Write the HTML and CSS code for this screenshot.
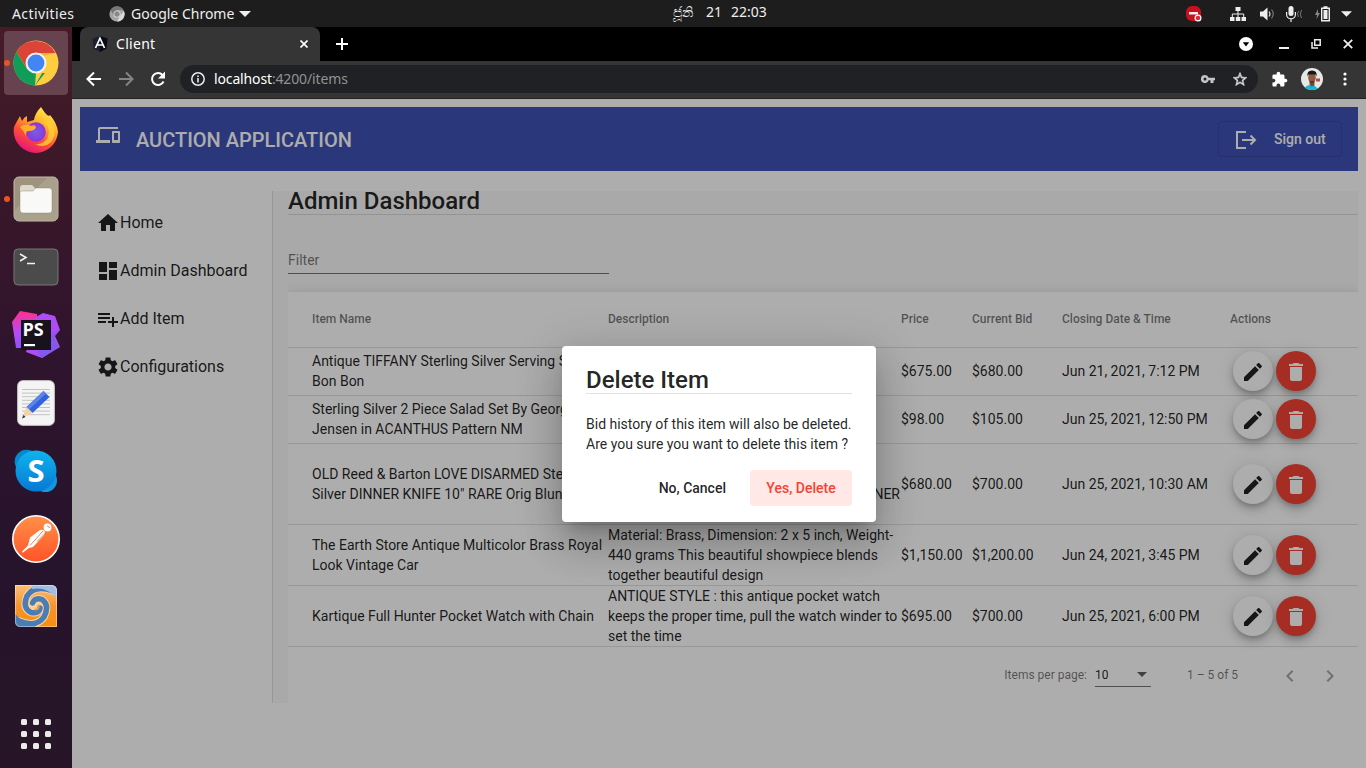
FILE: index.html
```html
<!DOCTYPE html>
<html lang="en">
<head>
<meta charset="utf-8">
<title>Client</title>
<link rel="stylesheet" href="styles.css">
</head>
<body>
<svg class="defs" width="0" height="0">
  <defs>
    <symbol id="edit" viewBox="0 0 24 24"><path d="M3 17.25V21h3.75L17.81 9.94l-3.75-3.75L3 17.25zM20.71 7.04c.39-.39.39-1.02 0-1.41l-2.34-2.34c-.39-.39-1.02-.39-1.41 0l-1.83 1.83 3.75 3.75 1.83-1.83z"/></symbol>
    <symbol id="trash" viewBox="0 0 24 24"><path d="M6 19c0 1.1.9 2 2 2h8c1.1 0 2-.9 2-2V7H6v12zM19 4h-3.5l-1-1h-5l-1 1H5v2h14V4z"/></symbol>
  </defs>
</svg>
<div class="desktop">
  <header class="topbar">
    <span class="activities">Activities</span>
    <svg class="mono-chrome" viewBox="0 0 16 16"><circle cx="8" cy="8" r="7.6" fill="#a5a5a5"/><path d="M1.5 4A7.6 7.6 0 0 1 14.6 4H8L5 10z" fill="#777"/><path d="M15 5a7.6 7.6 0 0 1-7 10.600l3-5.600z" fill="#d8d8d8"/><circle cx="8" cy="8" r="3.600" fill="#ddd"/><circle cx="8" cy="8" r="2.700" fill="#888"/></svg>
    <span class="appname">Google Chrome</span>
    <svg class="caret" viewBox="0 0 12 6"><path d="M0 0h12L6 6z"/></svg>
    <span class="clock"><span class="month">ජූනි</span><span>21</span><span>22:03</span></span>
    <div class="tray">
      <svg class="t-alert" width="18" height="18" viewBox="0 0 18 18"><rect x="1" y="1" width="15" height="15" rx="6" fill="#c9101e"/><rect x="4" y="7" width="9" height="2.500" fill="#eee"/><circle cx="13" cy="13" r="3.500" fill="#fff"/><circle cx="13" cy="13" r="2.300" fill="#e02a36"/></svg>
      <svg class="t-net" width="16" height="14" viewBox="0 0 16 14"><path d="M5.500 0h5v4h-5zM0 10h4.500v4H0zM5.800 10h4.500v4H5.800zM11.500 10H16v4h-4.500z"/><path d="M8 4v6M2.300 10V7h11.400v3" fill="none" stroke="#eee"/></svg>
      <svg class="t-vol" width="15" height="14" viewBox="0 0 15 14"><path d="M0 4.500h3L7.500.5v13L3 9.500H0z"/><path d="M9 4.500q2 2.500 0 5" fill="none" stroke="#ddd" stroke-width="1.200"/><path d="M11.500 2.500q3.500 4.500 0 9" fill="none" stroke="#777" stroke-width="1.200"/></svg>
      <svg class="t-mic" width="17" height="16" viewBox="0 0 17 16"><rect x="2.500" y="0" width="5" height="10" rx="2.500"/><path d="M.6 6v2.500a4.400 4.400 0 0 0 8.800 0V6M5 13v3" fill="none" stroke="#eee" stroke-width="1.200"/><path d="M12.500 5q-2 3 0 6M15.500 4q-2.500 4 0 8" fill="none" stroke="#777"/></svg>
      <svg class="t-bat" width="15" height="16" viewBox="0 0 15 16"><path d="M3 3L0 9h2l-.5 4L5 7H3z" fill="#888"/><path d="M6.700 2.200h7.600v12.600H6.700zM8.500 1h4" fill="none" stroke="#eee" stroke-width="1.400"/><path d="M8.500 4h4v9h-4z"/></svg>
      <svg class="t-caret" width="11" height="6" viewBox="0 0 12 6"><path d="M0 0h12L6 6z"/></svg>
    </div>
  </header>

  <div class="workspace">
    <nav class="dock">
      <div class="dock-item active"><i class="running"></i>
        <svg width="46" height="46" viewBox="0 0 46 46"><circle cx="23" cy="23" r="22.500" fill="#ffcd40"/><path d="M3.500 11.800A22.500 22.500 0 0 1 42.500 13H23L13.500 28z" fill="#db4437"/><path d="M3.500 11.800L14 29l9 4.500L22 45.500A22.500 22.500 0 0 1 3.500 11.800z" fill="#0f9d58"/><path d="M14 28l9 5h9L22 45.500 14.200 28z" fill="#0f9d58"/><path d="M22 45.500L32 28l-9 5z" fill="#ffcd40"/><path d="M23 13h19l-19 5z" fill="#9e6a1d" opacity=".25"/><circle cx="23" cy="23" r="10.500" fill="#f1f1f1"/><circle cx="23" cy="23" r="8.400" fill="#4285f4"/></svg>
      </div>
      <div class="dock-item firefox">
        <svg width="46" height="48" viewBox="0 0 46 48"><defs><linearGradient id="ff" x1=".8" y1="0" x2=".3" y2="1"><stop offset="0" stop-color="#fff44f"/><stop offset=".35" stop-color="#ffb52c"/><stop offset=".65" stop-color="#ff4f38"/><stop offset="1" stop-color="#e5127a"/></linearGradient><radialGradient id="fp"><stop offset="0" stop-color="#6f62e8"/><stop offset="1" stop-color="#9034d8"/></radialGradient></defs><path d="M3 17L7 10l2 5q2-4 5-5v6l7-2q1-7 7-13 3 5 6 8l2 1 1-1q7 8 8 17A22.400 22.400 0 0 1 23 47 22.400 22.400 0 0 1 .6 25Q.6 20 3 17z" fill="url(#ff)"/><circle cx="23" cy="26" r="9.800" fill="url(#fp)"/><path d="M7 21q6-4 11-1 4-2 5 1-1 4-7 4-4 0-3 5-2-5-6-9z" fill="#ffad2b"/><path d="M31 16q8 7 3 17-5 6-12 5 10 5 17-3 6-10-2-20z" fill="#ffcf36" opacity=".8"/></svg>
      </div>
      <div class="dock-item"><i class="running"></i>
        <svg width="46" height="46" viewBox="0 0 46 46"><rect x="1" y="1" width="44" height="44" rx="5" fill="#9d937e" stroke="#c5bda9"/><path d="M2 34L34 2h10v42H2z" fill="#aaa18c"/><path d="M7 12q0-3 3-3h9l4 4v8H7z" fill="#ddd8cc"/><path d="M7 17q0-2 2-2h11l3-3h13q3 0 3 3v19q0 3-3 3H10q-3 0-3-3z" fill="#f9f9f8" stroke="#857b68" stroke-width=".4"/></svg>
      </div>
      <div class="dock-item">
        <svg width="46" height="38" viewBox="0 0 46 38"><rect x="1" y="1" width="44" height="36" rx="4" fill="#4b4b4b" stroke="#777"/><path d="M7 6l6 3.500L7 13M14 15.500h8" fill="none" stroke="#f1f1f1" stroke-width="1.600"/></svg>
      </div>
      <div class="dock-item storm">
        <svg width="48" height="48" viewBox="0 0 48 48"><defs><linearGradient id="pa" x1="0" y1="0" x2="0" y2="1"><stop offset="0" stop-color="#ff318c"/><stop offset=".6" stop-color="#b74af7"/><stop offset="1" stop-color="#8b52ff"/></linearGradient></defs><path d="M8 1l17 3 1 20-12 14H4L0 12z" fill="url(#pa)"/><path d="M24 7l7-4 12 3 5 14-5 6 5 11-18 11-16-6z" fill="#b04cf5"/><path d="M37 27l10-8-5 8 5 10-17 11-5-5z" fill="#8258ed"/><rect x="9" y="10" width="30" height="30" fill="#18121c"/><text x="10.500" y="26" class="ps">PS</text><path d="M12 34h11v2.200H12z" fill="#fff"/></svg>
      </div>
      <div class="dock-item">
        <svg width="38" height="46" viewBox="0 0 38 46"><rect x=".7" y=".7" width="36.600" height="44.600" rx="5" fill="#f4f4f4" stroke="#d2d2d2"/><path d="M5 9.500h28M5 13.100h28M5 16.700h28M5 20.300h28M5 23.900h28M5 27.500h28M5 31.100h28M5 34.700h28" stroke="#c2c2c2"/><path d="M26.500 11l6 6-17 16-6-6z" fill="#3462dd"/><path d="M26.500 11l2.500 2.500-17 16-2.500-2.500z" fill="#5a86ec"/><path d="M9.500 27l6 6L5 38z" fill="#f2d2ad"/><path d="M6.500 35l2 2L5 38.500z" fill="#333"/></svg>
      </div>
      <div class="dock-item">
        <svg width="44" height="44" viewBox="0 0 44 44"><defs><linearGradient id="sk" x1="0" y1="0" x2="0" y2="1"><stop offset="0" stop-color="#0eb4ee"/><stop offset="1" stop-color="#0878d4"/></linearGradient></defs><circle cx="12.500" cy="12.500" r="11.800" fill="#0789cf"/><circle cx="31.500" cy="31.500" r="11.500" fill="#1597de"/><circle cx="22" cy="22" r="20.500" fill="url(#sk)"/><text x="22" y="33" class="skype-s">S</text></svg>
      </div>
      <div class="dock-item">
        <svg width="48" height="48" viewBox="0 0 48 48"><defs><linearGradient id="pm" x1="0" y1="0" x2="0" y2="1"><stop offset="0" stop-color="#ff9048"/><stop offset="1" stop-color="#ff5327"/></linearGradient></defs><circle cx="24" cy="24" r="23.200" fill="url(#pm)" stroke="#fff" stroke-width="1.600"/><circle cx="35.500" cy="12.500" r="3.900" fill="#fff"/><path d="M28 15q3-1 5 1.500 0 3-3 6L21 32l-4 1-6 4.500q-2 0 0-2l5-5 2-8z" fill="#fff"/><path d="M31 16L18 30.500M33 18.500l-8 8M35.500 10.500q.5 2 2.500 2" stroke="#ff6c37" stroke-width=".9" fill="none"/></svg>
      </div>
      <div class="dock-item swirl">
        <svg width="42" height="42" viewBox="0 0 42 42"><defs><linearGradient id="sw" x1="0" y1="0" x2="0" y2="1"><stop offset="0" stop-color="#fbc07c"/><stop offset=".5" stop-color="#f5942e"/><stop offset="1" stop-color="#f98c0c"/></linearGradient><clipPath id="swc"><path d="M0 0h36q6 0 6 6v36H6q-6 0-6-6z"/></clipPath></defs><g clip-path="url(#swc)"><path d="M0 0h42v42H0z" fill="url(#sw)"/><g fill="none" stroke-linecap="round"><g stroke="#fcd3a0" stroke-width="7.500"><path d="M38 6Q20-1 12 11 7 23 16 27.500 24 29 25 23 24 19 20 20.500"/><path d="M4 36Q21 43 29 32 35 20 27 14.500 20 12 17.500 18 17 23 20 24"/></g><g stroke="#4a7cb5" stroke-width="5.500"><path d="M38 6Q20-1 12 11 7 23 16 27.500 24 29 25 23"/><path d="M4 36Q21 43 29 32 35 20 27 14.500 20 12 17.500 18"/></g><path d="M20.500 24.500q4 0 3-4" stroke="#f39a3d" stroke-width="2"/></g><path d="M17 0h25v13Q31 1 17 4z" fill="#a3bee2"/><path d="M0 29q11 12 24 9l-4 4H0z" fill="#4a7cb5"/></g><path d="M.5.5H36q5.500 0 5.500 6v35H6q-5.500 0-5.500-6z" fill="none" stroke="#fff" opacity=".4"/></svg>
      </div>
      <div class="dock-apps"><i></i><i></i><i></i><i></i><i></i><i></i><i></i><i></i><i></i></div>
    </nav>

    <section class="browser">
      <div class="tabstrip">
        <div class="tab">
          <svg width="16" height="16" viewBox="0 0 16 16"><path d="M8 0l7.500 2.600-1.200 10L8 16l-6.300-3.400L.5 2.600z" fill="#1b2030"/><path d="M8 0l7.500 2.600-1.200 10L8 16z" fill="#080b16"/><path d="M3.500 12L8 2.200 12.500 12M5.500 9h5" fill="none" stroke="#fff" stroke-width="1.700"/></svg>
          <span>Client</span>
          <svg class="tab-close" width="8" height="8" viewBox="0 0 8 8"><path d="M.5.5l7 7M7.500.5l-7 7" stroke="#fff" stroke-width="1.700"/></svg>
        </div>
        <svg class="newtab" width="12" height="12" viewBox="0 0 12 12"><path d="M6 0v12M0 6h12" stroke="#fff" stroke-width="2"/></svg>
        <div class="wincontrols">
          <svg width="14" height="14" viewBox="0 0 14 14"><circle cx="7" cy="7" r="7" fill="#fff"/><path d="M3.800 5.200h6.400L7 9.500z" fill="#000"/></svg>
          <svg width="10" height="10" viewBox="0 0 10 10"><path d="M0 9h10" stroke="#eee" stroke-width="2"/></svg>
          <svg width="10" height="10" viewBox="0 0 10 10"><path d="M3.700.8h5.500v5.500H3.700zM1 3v6h6" fill="none" stroke="#eee" stroke-width="1.500"/></svg>
          <svg width="10" height="10" viewBox="0 0 10 10"><path d="M.8.8l8.400 8.400M9.200.8L.8 9.200" stroke="#eee" stroke-width="1.800"/></svg>
        </div>
      </div>
      <div class="toolbar">
        <svg width="16" height="16" viewBox="0 0 16 16"><path d="M15 8H2M8 1.500L1.500 8 8 14.500" fill="none" stroke="#fff" stroke-width="2"/></svg>
        <svg width="16" height="16" viewBox="0 0 16 16"><path d="M1 8h13M8 1.500L14.500 8 8 14.500" fill="none" stroke="#858585" stroke-width="2"/></svg>
        <svg width="16" height="16" viewBox="0 0 16 16"><path d="M13.500 10.500A6 6 0 1 1 12.500 4L14 5.500" fill="none" stroke="#fff" stroke-width="2"/><path d="M15 .5v7H8z" fill="#fff"/></svg>
        <div class="omnibox">
          <svg width="14" height="14" viewBox="0 0 14 14"><circle cx="7" cy="7" r="6.200" fill="none" stroke="#e8eaed" stroke-width="1.500"/><path d="M6.200 6h1.600v4.500H6.200zM6.200 3.400h1.600V5H6.200z" fill="#e8eaed"/></svg>
          <span class="url"><b>localhost</b>:4200/items</span>
          <svg class="key" width="14" height="8" viewBox="0 0 14 8"><path fill-rule="evenodd" d="M4 0a4 4 0 1 0 3.700 5.300H9.500V8h3V5.300H14V2.700H7.700A4 4 0 0 0 4 0zm0 2.500a1.500 1.500 0 1 1 0 3 1.500 1.500 0 0 1 0-3z" fill="#c4c4c4"/></svg>
          <svg width="14" height="14" viewBox="0 0 24 24"><path d="M22 9.240l-7.190-.62L12 2 9.190 8.630 2 9.240l5.460 4.730L5.820 21 12 17.270 18.180 21l-1.630-7.030L22 9.240zM12 15.400l-3.760 2.270 1-4.280-3.320-2.880 4.380-.38L12 6.100l1.710 4.040 4.380.38-3.320 2.880 1 4.280L12 15.400z" fill="#d2d2d2" stroke="#d2d2d2" stroke-width=".8" transform="translate(-2.400 -1.800) scale(1.200)"/></svg>
        </div>
        <svg class="ext" width="17" height="17" viewBox="0 0 24 24"><path fill="#fff" d="M20.500 11H19V7c0-1.100-.9-2-2-2h-4V3.500C13 2.120 11.880 1 10.500 1S8 2.120 8 3.500V5H4c-1.100 0-1.990.9-1.990 2v3.800H3.500c1.490 0 2.700 1.210 2.700 2.700s-1.210 2.700-2.700 2.700H2V20c0 1.100.9 2 2 2h3.800v-1.500c0-1.490 1.210-2.700 2.700-2.700 1.490 0 2.700 1.210 2.700 2.700V22H17c1.100 0 2-.9 2-2v-4h1.500c1.380 0 2.500-1.120 2.500-2.500S21.880 11 20.500 11z"/></svg>
        <svg class="avatar" width="22" height="22" viewBox="0 0 22 22"><defs><clipPath id="av"><circle cx="11" cy="11" r="11"/></clipPath></defs><g clip-path="url(#av)"><path d="M0 0h22v22H0z" fill="#e6e8e6"/><path d="M15 10.500h4v3h-4z" fill="#b84848"/><path d="M3 22q1-5 7-5 5 0 7 5z" fill="#16b5d5"/><path d="M8.500 12h5v5.500l-3 1-2-2z" fill="#7c4a32"/><ellipse cx="11" cy="9.500" rx="3.800" ry="5.200" fill="#8f5b42"/><path d="M6.500 8.500q-1-6 4.500-6 5.500 0 4.500 6l-1-2-7 0z" fill="#1b1717"/><path d="M8.500 12.500q2.500 1 5 0-1 3-2.500 3t-2.500-3z" fill="#5a3526"/></g></svg>
        <svg class="menu" width="4" height="14" viewBox="0 0 4 14"><g fill="#fff"><circle cx="2" cy="2" r="1.600"/><circle cx="2" cy="7" r="1.600"/><circle cx="2" cy="12" r="1.600"/></g></svg>
      </div>

      <main class="page">
        <div class="appbar">
          <svg class="devices" width="24" height="24" viewBox="0 0 24 24"><path d="M4 6h18V4H4c-1.100 0-2 .9-2 2v11H0v3h14v-3H4V6zm19 2h-6c-.55 0-1 .45-1 1v10c0 .55.45 1 1 1h6c.55 0 1-.45 1-1V9c0-.55-.45-1-1-1zm-1 9h-4v-7h4v7z"/></svg>
          <span class="brand">AUCTION APPLICATION</span>
          <button class="signout"><svg width="22" height="20" viewBox="0 0 22 20"><path d="M11 2H2v16h9M7 10h12M15.500 5.500L20 10l-4.500 4.500" fill="none" stroke="#fff" stroke-width="2"/></svg><span>Sign out</span></button>
        </div>
        <div class="shell">
          <aside class="sidenav">
            <a><svg viewBox="0 0 24 24"><path d="M10 20v-6h4v6h5v-8h3L12 3 2 12h3v8z"/></svg>Home</a>
            <a><svg viewBox="0 0 24 24"><path d="M3 13h8V3H3v10zm0 8h8v-6H3v6zm10 0h8V11h-8v10zm0-18v6h8V3h-8z"/></svg>Admin Dashboard</a>
            <a><svg viewBox="0 0 24 24"><path d="M14 10H2v2h12v-2zm0-4H2v2h12V6zm4 8v-4h-2v4h-4v2h4v4h2v-4h4v-2h-4zM2 16h8v-2H2v2z"/></svg>Add Item</a>
            <a><svg viewBox="0 0 24 24"><path d="M19.140 12.940c.04-.3.060-.61.060-.94 0-.32-.02-.64-.07-.94l2.030-1.580c.18-.14.230-.41.120-.61l-1.920-3.320c-.12-.22-.37-.29-.59-.22l-2.390.96c-.5-.38-1.030-.7-1.620-.94l-.36-2.540c-.04-.24-.24-.41-.48-.41h-3.840c-.24 0-.43.17-.47.41l-.36 2.540c-.59.24-1.130.57-1.620.94l-2.390-.96c-.22-.08-.47 0-.59.22L2.740 8.870c-.12.21-.08.470.12.610l2.030 1.580c-.05.3-.09.630-.09.940s.02.640.07.940l-2.030 1.580c-.18.140-.23.410-.12.610l1.920 3.320c.12.220.37.290.59.220l2.390-.96c.5.380 1.030.7 1.620.94l.36 2.540c.05.240.24.410.48.410h3.840c.24 0 .44-.17.470-.41l.36-2.540c.59-.24 1.130-.56 1.620-.94l2.390.96c.22.080.47 0 .59-.22l1.920-3.320c.12-.22.070-.47-.12-.61l-2.010-1.580zM12 15.600c-1.980 0-3.600-1.620-3.600-3.600s1.620-3.600 3.600-3.600 3.600 1.620 3.600 3.600-1.620 3.600-3.600 3.600z"/></svg>Configurations</a>
          </aside>
          <div class="content">
            <h1>Admin Dashboard</h1>
            <div class="filter">Filter</div>
            <div class="table">
              <div class="row head"><span>Item Name</span><span>Description</span><span>Price</span><span>Current Bid</span><span>Closing Date &amp; Time</span><span>Actions</span></div>
              <div class="row short"><span>Antique TIFFANY Sterling Silver Serving Spoon<br>Bon Bon</span><span></span><span>$675.00</span><span>$680.00</span><span>Jun 21, 2021, 7:12 PM</span><span class="actions"><button class="fab"><svg><use href="#edit"/></svg></button><button class="fab warn"><svg><use href="#trash"/></svg></button></span></div>
              <div class="row short"><span>Sterling Silver 2 Piece Salad Set By Georg<br>Jensen in ACANTHUS Pattern NM</span><span></span><span>$98.00</span><span>$105.00</span><span>Jun 25, 2021, 12:50 PM</span><span class="actions"><button class="fab"><svg><use href="#edit"/></svg></button><button class="fab warn"><svg><use href="#trash"/></svg></button></span></div>
              <div class="row tall"><span>OLD Reed &amp; Barton LOVE DISARMED Sterling<br>Silver DINNER KNIFE 10" RARE Orig Blunt</span><span class="tail">DINNER</span><span>$680.00</span><span>$700.00</span><span>Jun 25, 2021, 10:30 AM</span><span class="actions"><button class="fab"><svg><use href="#edit"/></svg></button><button class="fab warn"><svg><use href="#trash"/></svg></button></span></div>
              <div class="row"><span>The Earth Store Antique Multicolor Brass Royal<br>Look Vintage Car</span><span>Material: Brass, Dimension: 2 x 5 inch, Weight-<br>440 grams This beautiful showpiece blends<br>together beautiful design</span><span>$1,150.00</span><span>$1,200.00</span><span>Jun 24, 2021, 3:45 PM</span><span class="actions"><button class="fab"><svg><use href="#edit"/></svg></button><button class="fab warn"><svg><use href="#trash"/></svg></button></span></div>
              <div class="row"><span>Kartique Full Hunter Pocket Watch with Chain</span><span>ANTIQUE STYLE : this antique pocket watch<br>keeps the proper time, pull the watch winder to<br>set the time</span><span>$695.00</span><span>$700.00</span><span>Jun 25, 2021, 6:00 PM</span><span class="actions"><button class="fab"><svg><use href="#edit"/></svg></button><button class="fab warn"><svg><use href="#trash"/></svg></button></span></div>
              <div class="paginator">
                <span>Items per page:</span>
                <div class="select">10<svg width="10" height="5" viewBox="0 0 10 5"><path d="M0 0h10L5 5z"/></svg></div>
                <span class="range">1 – 5 of 5</span>
                <svg class="chev" viewBox="0 0 24 24"><path d="M15.410 7.410L14 6l-6 6 6 6 1.410-1.410L10.830 12z"/></svg>
                <svg class="chev next" viewBox="0 0 24 24"><path d="M10 6L8.590 7.410 13.170 12l-4.580 4.590L10 18l6-6z"/></svg>
              </div>
            </div>
          </div>
        </div>
        <div class="overlay">
          <div class="dialog">
            <h2>Delete Item</h2>
            <p>Bid history of this item will also be deleted.<br>Are you sure you want to delete this item ?</p>
            <div class="dialog-actions"><button>No, Cancel</button><button class="danger">Yes, Delete</button></div>
          </div>
        </div>
      </main>
    </section>
  </div>
</div>
</body>
</html>
```
FILE: styles.css
```css
* { box-sizing: border-box; }
body { margin: 0; overflow: hidden; font-family: Roboto, sans-serif; }
svg { display: block; flex: none; }
.defs { position: absolute; }
button { font: inherit; border: 0; padding: 0; background: none; }
.desktop { width: 1366px; height: 768px; display: flex; flex-direction: column; background: #000; }

/* GNOME top bar */
.topbar { position: relative; height: 27px; flex: none; display: flex; align-items: center; background: #1d1d1d; color: #eee; font: 14px/27px "Noto Sans", sans-serif; padding-left: 12px; }
.topbar svg { fill: #eee; }
.activities { width: 97px; letter-spacing: .4px; }
.mono-chrome { width: 16px; height: 16px; margin-right: 6px; }
.appname { width: 108px; white-space: nowrap; }
.caret { width: 12px; height: 6px; }
.clock { position: absolute; left: 673px; top: -2px; display: flex; gap: 9px; }
.month { width: 24px; white-space: nowrap; }
.tray { margin-left: auto; display: flex; align-items: center; padding-right: 14px; }
.t-net { margin-left: 27px; }
.t-vol { margin-left: 14px; }
.t-mic { margin-left: 11px; }
.t-bat { margin-left: 12px; }
.t-caret { margin-left: 11px; }

.workspace { flex: 1; min-height: 0; display: flex; }

/* Launcher */
.dock { width: 72px; flex: none; position: relative; background: linear-gradient(#451b26, #30142d 42%, #26132c 75%, #271527); padding: 4px 4px 0; display: flex; flex-direction: column; gap: 4px; }
.dock-item { position: relative; height: 64px; flex: none; border-radius: 4px; display: flex; align-items: center; justify-content: center; }
.dock-item.active { background: #66434e; }
.firefox, .storm, .swirl { padding-bottom: 2px; }
.running { position: absolute; left: 0; top: 29px; width: 6px; height: 6px; border-radius: 50%; background: #e95420; }
.dock-apps { display: grid; grid-template-columns: repeat(3, 6px); gap: 6px; margin: auto auto 19px 17px; }
.dock-apps i { width: 6px; height: 6px; border-radius: 1.5px; background: #ecebe9; }
.ps { font: 700 18px "Open Sans", sans-serif; fill: #fff; }
.skype-s { font: 700 31px "Open Sans", sans-serif; fill: #fff; text-anchor: middle; }

/* Browser chrome */
.browser { flex: 1; min-width: 0; display: flex; flex-direction: column; }
.tabstrip { height: 34px; flex: none; display: flex; align-items: center; padding-left: 8px; }
.tab { width: 240px; height: 34px; display: flex; align-items: center; gap: 8px; padding: 0 12px; background: #353535; border-radius: 8px 8px 0 0; color: #fff; font: 14px "Noto Sans", sans-serif; }
.tab span { padding-bottom: 2px; letter-spacing: .3px; }
.tab-close { margin-left: auto; }
.newtab { margin-left: 16px; }
.wincontrols { margin-left: auto; display: flex; align-items: center; padding-right: 13px; gap: 22px; }
.wincontrols svg:first-child { margin-right: 4px; }
.toolbar { height: 38px; flex: none; background: #353535; border-bottom: 1px solid #222; display: flex; align-items: center; padding: 0 19px 1px 14px; }
.toolbar > svg { margin-right: 16px; }
.omnibox { width: 1078px; height: 28px; margin-left: -2px; border-radius: 14px; background: #202124; display: flex; align-items: center; padding: 0 11px; }
.url { margin-left: 9px; padding-bottom: 2px; color: #919191; font: 14px "Noto Sans", sans-serif; letter-spacing: -.14px; }
.url b { font-weight: 400; color: #fff; }
.key { margin: 0 18px 0 auto; }
.toolbar .ext { margin: 0 13px 0 13px; }
.toolbar .avatar { margin-right: 20px; }
.toolbar .menu { margin: 0; }

/* Application */
.page { position: relative; flex: 1; min-height: 0; background: #fff; padding: 8px; color: rgba(0,0,0,.87); }
.appbar { height: 64px; display: flex; align-items: center; padding: 0 16px; background: #3f51b5; color: #fff; font-weight: 500; }
.devices { fill: #fff; margin-bottom: 8px; }
.brand { margin-left: 16px; padding-top: 2px; font-size: 20px; }
.signout { width: 124px; height: 36px; margin-left: auto; border: 1px solid rgba(0,0,0,.12); border-radius: 4px; color: #fff; font-size: 14px; font-weight: 500; display: flex; align-items: center; gap: 17px; padding: 0 0 0 16px; white-space: nowrap; }
.signout svg { margin-top: 2px; }
.shell { margin-top: 20px; height: 512px; display: flex; }
.sidenav { width: 193px; flex: none; border-right: 1px solid rgba(0,0,0,.12); padding: 8px 16px; }
.sidenav a { height: 48px; display: flex; align-items: center; font-size: 16px; line-height: 24px; white-space: nowrap; }
.sidenav svg { width: 24px; height: 24px; fill: #212121; }
.content { flex: 1; min-width: 0; background: #fafafa; padding-left: 15px; }
h1, h2 { margin: 0; font-size: 24px; font-weight: 500; border-bottom: 1px solid rgba(0,0,0,.12); }
h1 { height: 24px; line-height: 20px; }
.filter { width: 321px; height: 34px; margin-top: 25px; border-bottom: 1px solid #757575; color: rgba(0,0,0,.54); font-size: 14px; line-height: 40px; }
.table { margin-top: 18px; background: #fff; box-shadow: 0 5px 5px -3px rgba(0,0,0,.2), 0 8px 10px 1px rgba(0,0,0,.14), 0 3px 14px 2px rgba(0,0,0,.12); clip-path: inset(-16px 0 0 0); height: 411px; font-size: 14px; line-height: 20px; }
.row { display: grid; grid-template-columns: 296px 293px 71px 90px 168px 1fr; align-items: center; padding-left: 24px; min-height: 48px; border-bottom: 1px solid rgba(0,0,0,.12); white-space: nowrap; }
.row.head { height: 56px; padding-bottom: 1px; font-size: 12px; font-weight: 500; color: rgba(0,0,0,.54); }
.row.short { padding-bottom: 1px; }
.row.tall { height: 81px; }
.tail { justify-self: end; padding: 20px 1px 0 0; }
.actions { display: flex; gap: 3px; padding-left: 3px; }
.fab { width: 40px; height: 40px; border-radius: 50%; background: #fff; display: grid; place-items: center; box-shadow: 0 3px 5px -1px rgba(0,0,0,.2), 0 6px 10px rgba(0,0,0,.14), 0 1px 18px rgba(0,0,0,.12); fill: #212121; }
.fab svg { width: 24px; height: 24px; margin-top: 2px; }
.fab.warn { background: #f44336; fill: #fff; }
.paginator { height: 56px; display: flex; align-items: center; justify-content: flex-end; padding-right: 16px; font-size: 12px; color: rgba(0,0,0,.54); white-space: nowrap; }
.select { width: 56px; height: 23px; margin-left: 8px; border-bottom: 1px solid #757575; color: rgba(0,0,0,.87); display: flex; align-items: center; justify-content: space-between; padding-right: 4px; }
.select svg { fill: #616161; }
.range { width: 51px; margin: 0 40px 0 36px; }
.chev { width: 24px; height: 24px; margin-top: 2px; fill: rgba(0,0,0,.35); }
.next { margin-left: 16px; }

/* Confirmation dialog */
.overlay { position: absolute; inset: 0; background: rgba(0,0,0,.32); display: flex; align-items: center; justify-content: center; }
.dialog { width: 314px; height: 176px; background: #fff; border-radius: 4px; padding: 24px 24px 0; box-shadow: 0 11px 15px -7px rgba(0,0,0,.2), 0 24px 38px 3px rgba(0,0,0,.14), 0 9px 46px 8px rgba(0,0,0,.12); }
h2 { height: 24px; line-height: 20px; }
.dialog p { margin: 20px 0 16px; font-size: 14px; line-height: 20px; white-space: nowrap; }
.dialog-actions { display: flex; justify-content: flex-end; gap: 8px; font-size: 14px; font-weight: 500; }
.dialog-actions button { height: 36px; padding: 0 16px; border-radius: 4px; color: rgba(0,0,0,.87); }
.dialog-actions .danger { width: 102px; background: #ffe8e6; color: #f44336; }
```
